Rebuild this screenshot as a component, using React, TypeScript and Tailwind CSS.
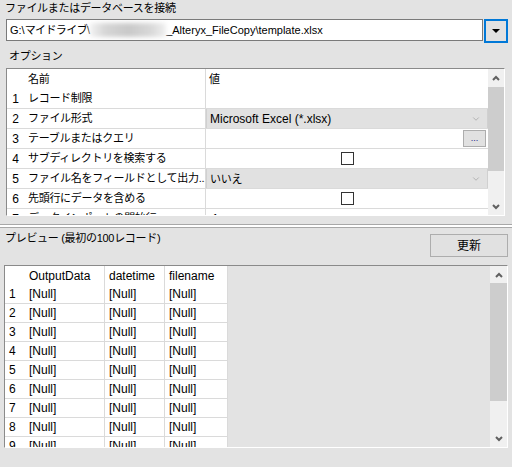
import { ChevronDown } from 'lucide-react';

const jp = 'text-[11px] tracking-[-0.3px]';

function Arrow({ up }: { up?: boolean }) {
  return (
    <svg width="8" height="6" viewBox="0 0 8 6" className="block">
      <polyline
        points={up ? '1,5 4,2 7,5' : '1,1 4,4 7,1'}
        fill="none"
        stroke="#606060"
        strokeWidth="2"
      />
    </svg>
  );
}

function Check() {
  return <div className="w-[13px] h-[13px] border border-[#333] bg-white" />;
}

function Combo({ text }: { text: React.ReactNode }) {
  return (
    <div className="h-full flex items-center justify-between bg-[#e1e1e1] border-x border-[#d0d0d0] pl-[3px] pr-[6px]">
      <span>{text}</span>
      <ChevronDown size={10} strokeWidth={1} color="#707070" />
    </div>
  );
}

const options: { name: string; value: React.ReactNode }[] = [
  { name: 'レコード制限', value: null },
  { name: 'ファイル形式', value: <Combo text="Microsoft Excel (*.xlsx)" /> },
  {
    name: 'テーブルまたはクエリ',
    value: (
      <div className="h-full flex items-center justify-end pr-[2px]">
        <div className="w-[23px] h-[17px] bg-[#e1e1e1] border border-[#adadad] flex items-center justify-center text-[9px] text-[#1a1a8a] leading-none">
          ...
        </div>
      </div>
    ),
  },
  { name: 'サブディレクトリを検索する', value: <div className="h-full flex items-center justify-center"><Check /></div> },
  { name: 'ファイル名をフィールドとして出力...', value: <Combo text={<span className={jp}>いいえ</span>} /> },
  { name: '先頭行にデータを含める', value: <div className="h-full flex items-center justify-center"><Check /></div> },
  { name: 'データインポートの開始行', value: <div className="h-full flex items-center pl-[6px]">1</div> },
];

export default function App() {
  return (
    <div className="w-[512px] h-[467px] overflow-hidden bg-[#e3e3e3] text-[12px] text-black font-['Liberation_Sans','Noto_Sans_CJK_JP',sans-serif] leading-none">
      {/* file / database */}
      <div className={`h-[19px] pl-[5px] pt-[3px] ${jp}`}>ファイルまたはデータベースを接続</div>
      <div className="flex pl-[6px] gap-[1px] h-[24px]">
        <div className="w-[477px] h-[22px] bg-white border border-[#7a7a7a] flex items-center pl-[3px] whitespace-nowrap overflow-hidden text-[11px]">
          <span>G:\<span className="tracking-[-0.6px]">マイドライブ</span>\</span>
          <span className="w-[76px] h-[14px] bg-[linear-gradient(90deg,#f2f2f2,#d6d6d6_20%,#c9c9c9_50%,#d8d8d8_80%,#f0f0f0)] blur-[2px]" />
          <span>_Alteryx_FileCopy\template.xlsx</span>
        </div>
        <button className="w-[24px] h-[24px] border-2 border-[#0078d7] bg-[#e1e1e1] flex items-center justify-center">
          <svg width="8" height="4" viewBox="0 0 8 4"><polygon points="0,0 8,0 4,4" fill="#000" /></svg>
        </button>
      </div>

      {/* options */}
      <div className={`h-[25px] pl-[9px] pt-[8px] ${jp}`}>オプション</div>
      <div className="ml-[6px] w-[499px] h-[148px] border-t border-l border-[#8a8a8a] border-b border-r border-b-white border-r-white flex overflow-hidden">
        <div className="flex-1 bg-white overflow-hidden">
          <div className="h-[20px] flex">
            <div className="w-[16px]" />
            <div className={`w-[182px] flex items-center pl-[5px] ${jp}`}>名前</div>
            <div className={`flex-1 flex items-center pl-[3px] border-l border-[#dadada] ${jp}`}>値</div>
          </div>
          {options.map((o, i) => (
            <div key={i} className="h-[20px] flex border-b border-[#dadada]">
              <div className="w-[16px] flex items-center justify-end pr-[4px]">{i + 1}</div>
              <div className={`w-[182px] flex items-center pl-[5px] whitespace-nowrap ${jp}`}>{o.name}</div>
              <div className="flex-1 border-l border-[#dadada]">{o.value}</div>
            </div>
          ))}
        </div>
        <div className="w-[16px] bg-[#f0f0f0] flex flex-col">
          <div className="h-[18px] flex items-center justify-center"><Arrow up /></div>
          <div className="h-[84px] bg-[#cdcdcd]" />
          <div className="flex-1" />
          <div className="h-[17px] flex items-center justify-center"><Arrow /></div>
        </div>
      </div>

      {/* splitter */}
      <div className="mt-[8px] h-[4px] border-t border-b border-[#a8a8a8] bg-white" />

      {/* preview */}
      <div className="h-[37px] flex justify-between">
        <div className={`pl-[5px] pt-[5px] ${jp}`}>プレビュー (最初の100レコード)</div>
        <button className="mt-[6px] mr-[4px] w-[78px] h-[23px] bg-[#e1e1e1] border border-[#adadad] text-[12px]">更新</button>
      </div>
      <div className="ml-[4px] w-[504px] h-[183px] border-t border-l border-[#8a8a8a] border-b border-r border-b-white border-r-white flex overflow-hidden">
        <div className="flex-1 overflow-hidden">
          <div className="w-[223px] bg-white">
            <div className="h-[19px] flex">
              <div className="w-[20px]" />
              <div className="w-[80px] pl-[4px] flex items-center border-r border-[#dadada]">OutputData</div>
              <div className="w-[60px] pl-[4px] flex items-center border-r border-[#dadada]">datetime</div>
              <div className="w-[63px] pl-[4px] flex items-center border-r border-[#dadada]">filename</div>
            </div>
            {[1, 2, 3, 4, 5, 6, 7, 8, 9].map((n) => (
              <div key={n} className="h-[19px] flex border-b border-[#dadada]">
                <div className="w-[20px] pl-[4px] flex items-center">{n}</div>
                <div className="w-[80px] pl-[4px] flex items-center border-r border-[#dadada]">[Null]</div>
                <div className="w-[60px] pl-[4px] flex items-center border-r border-[#dadada]">[Null]</div>
                <div className="w-[63px] pl-[4px] flex items-center border-r border-[#dadada]">[Null]</div>
              </div>
            ))}
          </div>
        </div>
        <div className="w-[17px] bg-[#f0f0f0] flex flex-col">
          <div className="h-[17px] flex items-center justify-center"><Arrow up /></div>
          <div className="h-[118px] bg-[#cdcdcd]" />
          <div className="flex-1" />
          <div className="h-[17px] flex items-center justify-center"><Arrow /></div>
        </div>
      </div>
    </div>
  );
}
